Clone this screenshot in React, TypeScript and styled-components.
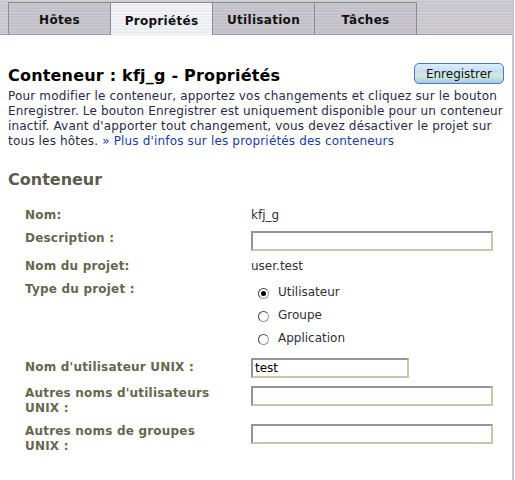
import { FC } from 'react';
import styled, { createGlobalStyle, css } from 'styled-components';

const GlobalStyle = createGlobalStyle`
    html, body {
        margin: 0;
        padding: 0;
        background: #fff;
    }
    body {
        font-family: 'DejaVu Sans', Verdana, sans-serif;
        font-size: 12px;
        color: #2f2f4a;
    }
`;

// dithered look of the old theme: thin coloured stripes
const stripes = (a: string, b: string, c: string) => css`
    background-color: ${a};
    background-image: repeating-linear-gradient(
        to bottom,
        ${a} 0px,
        ${a} 1px,
        ${b} 1px,
        ${b} 2px,
        ${c} 2px,
        ${c} 3px
    );
`;

const Page = styled.div`
    width: 514px;
    min-height: 480px;
    border-right: 2px solid #c4c4d4;
    box-sizing: border-box;
`;

const TabBar = styled.div`
    display: flex;
    align-items: flex-end;
    height: 35px;
    padding-left: 8px;
    box-sizing: border-box;
    border-bottom: 1px solid #9c9ca8;
    ${stripes('#d2cedc', '#c4ccbc', '#ccc0d8')}
`;

const Tab = styled.div<{ $active?: boolean }>`
    width: 103px;
    height: 32px;
    box-sizing: border-box;
    border: 1px solid #8a8a94;
    border-bottom: none;
    margin-right: -1px;
    display: flex;
    align-items: center;
    justify-content: center;
    padding-top: 3px;
    font-weight: bold;
    font-size: 12px;
    letter-spacing: 0.3px;
    color: #111;
    ${(p) =>
        p.$active
            ? css`
                  ${stripes('#f6f6fa', '#e4f2ee', '#f0e6f4')}
                  height: 33px;
                  margin-bottom: -1px;
              `
            : stripes('#ccc8d8', '#bec8b8', '#c8bad4')}
`;

const Content = styled.div`
    padding: 29px 8px 0 8px;
`;

const Header = styled.div`
    display: flex;
    align-items: flex-start;
    justify-content: space-between;
`;

const Title = styled.h1`
    margin: 2px 0 0 0;
    font-size: 16px;
    font-weight: bold;
    letter-spacing: 0.2px;
    color: #000;
`;

const SaveButton = styled.button`
    font-family: 'DejaVu Sans', Verdana, sans-serif;
    font-size: 12px;
    color: #111;
    height: 21px;
    width: 90px;
    margin: -1px 0 0 0;
    padding: 0;
    border: 1px solid #4a78b8;
    border-radius: 5px;
    background: linear-gradient(to bottom, #d8f0ff 0%, #c8dcf4 40%, #d4ecd8 60%, #a8c8ec 100%);
`;

const Intro = styled.p`
    margin: 4px 0 0 0;
    line-height: 15px;
    font-size: 12px;
    letter-spacing: 0.17px;
    color: #2a2a48;
`;

const MoreLink = styled.a`
    color: #1a3c9c;
    text-decoration: none;
    margin-left: 4px;
`;

const Section = styled.h2`
    margin: 21px 0 0 0;
    font-size: 16px;
    font-weight: bold;
    color: #5c5c4a;
`;

const Form = styled.div`
    display: grid;
    grid-template-columns: 226px 1fr;
    row-gap: 8px;
    padding-left: 17px;
    margin-top: 19px;
`;

const Label = styled.div<{ $pad?: number }>`
    font-weight: bold;
    font-size: 12px;
    letter-spacing: 0.2px;
    color: #66664f;
    line-height: 15px;
    padding-top: ${(p) => p.$pad ?? 0}px;
    padding-right: 30px;
`;

const Value = styled.div`
    font-size: 12px;
    color: #2f2f3a;
    line-height: 15px;
`;

const TextInput = styled.input<{ $short?: boolean }>`
    box-sizing: border-box;
    width: ${(p) => (p.$short ? '158px' : '242px')};
    height: 20px;
    margin: 0;
    padding: 0 2px;
    font-family: 'DejaVu Sans', Verdana, sans-serif;
    font-size: 12px;
    color: #000;
    background: #fff;
    border-style: solid;
    border-width: 2px;
    border-color: #9094a4 #c8c8a8 #c8c8a8 #9094a4;
    outline: none;
`;

const Radios = styled.div`
    display: flex;
    flex-direction: column;
    gap: 8px;
    padding: 3px 0 4px 7px;
`;

const RadioRow = styled.label`
    display: flex;
    align-items: center;
    gap: 9px;
    color: #2f2f3a;
    line-height: 15px;
`;

const RadioDot = styled.span<{ $checked?: boolean }>`
    width: 11px;
    height: 11px;
    box-sizing: border-box;
    border-radius: 50%;
    border: 1px solid #9a9a9a;
    border-top-color: #444;
    border-left-color: #444;
    background: #fff;
    display: flex;
    align-items: center;
    justify-content: center;
    margin-top: 2px;

    &::after {
        content: '';
        width: 5px;
        height: 5px;
        border-radius: 50%;
        background: ${(p) => (p.$checked ? '#000' : 'transparent')};
    }
`;

const tabs = ['Hôtes', 'Propriétés', 'Utilisation', 'Tâches'];
const projectTypes = ['Utilisateur', 'Groupe', 'Application'];

const App: FC = () => {
    return (
        <>
            <GlobalStyle />
            <Page>
                <TabBar>
                    {tabs.map((t) => (
                        <Tab key={t} $active={t === 'Propriétés'}>
                            {t}
                        </Tab>
                    ))}
                </TabBar>
                <Content>
                    <Header>
                        <Title>Conteneur : kfj_g - Propriétés</Title>
                        <SaveButton type="button">Enregistrer</SaveButton>
                    </Header>
                    <Intro>
                        Pour modifier le conteneur, apportez vos changements et cliquez sur le bouton Enregistrer. Le
                        bouton Enregistrer est uniquement disponible pour un conteneur inactif. Avant d'apporter tout
                        changement, vous devez désactiver le projet sur tous les hôtes.
                        <MoreLink href="#">» Plus d'infos sur les propriétés des conteneurs</MoreLink>
                    </Intro>
                    <Section>Conteneur</Section>
                    <Form>
                        <Label>Nom:</Label>
                        <Value>kfj_g</Value>

                        <Label>Description :</Label>
                        <TextInput type="text" defaultValue="" />

                        <Label>Nom du projet:</Label>
                        <Value>user.test</Value>

                        <Label>Type du projet :</Label>
                        <Radios>
                            {projectTypes.map((t) => (
                                <RadioRow key={t}>
                                    <RadioDot $checked={t === 'Utilisateur'} />
                                    {t}
                                </RadioRow>
                            ))}
                        </Radios>

                        <Label $pad={2}>Nom d'utilisateur UNIX :</Label>
                        <TextInput type="text" $short defaultValue="test" />

                        <Label>Autres noms d'utilisateurs UNIX :</Label>
                        <TextInput type="text" defaultValue="" />

                        <Label>Autres noms de groupes UNIX :</Label>
                        <TextInput type="text" defaultValue="" />
                    </Form>
                </Content>
            </Page>
        </>
    );
};

export default App;
